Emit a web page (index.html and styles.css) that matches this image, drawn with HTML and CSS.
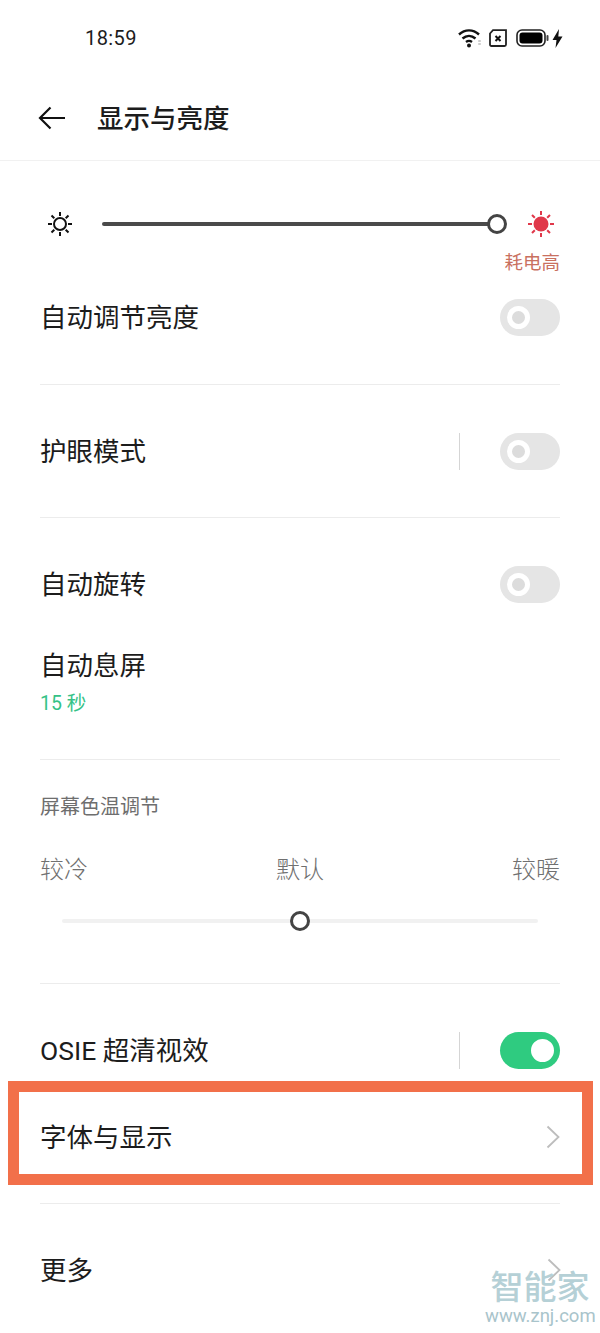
FILE: index.html
```html
<!DOCTYPE html>
<html lang="zh-CN">
<head>
    <meta charset="UTF-8">
    <meta name="viewport" content="width=device-width, initial-scale=1.0">
    <title>显示与亮度</title>
    <link rel="stylesheet" href="styles.css">
</head>
<body>
    <div class="phone">
        <div class="status-bar">
            <span class="time">18:59</span>
            <div class="status-icons">
                <svg class="wifi" width="24" height="20" viewBox="0 0 24 20">
                    <path d="M1 6.500C7 1 15 1 21 6.500M4.500 10.500C8.500 7 13.500 7 17.500 10.500M8 14C10 12.500 12 12.500 14 14" fill="none" stroke="#111" stroke-width="2.400"/>
                    <circle cx="11" cy="17.500" r="2" fill="#111"/>
                    <path d="M21.500 12v6" stroke="#ccc" stroke-width="2.500" stroke-dasharray="2 1"/>
                </svg>
                <svg width="18" height="18" viewBox="0 0 18 18">
                    <path d="M4 1.200H17V15.500Q17 17 15.500 17H2.500Q1 17 1 15.500V4.500Z" fill="none" stroke="#222" stroke-width="1.800"/>
                    <path d="M6.500 7L11.500 12M11.500 7L6.500 12" stroke="#111" stroke-width="2"/>
                </svg>
                <svg class="battery" width="33" height="18" viewBox="0 0 33 18">
                    <rect x="1" y="1" width="28" height="16" rx="5" fill="none" stroke="#222" stroke-width="1.600"/>
                    <rect x="3.500" y="3.500" width="23" height="11" rx="3" fill="#000"/>
                    <rect x="30.500" y="6" width="2" height="6" rx="1" fill="#444"/>
                </svg>
                <svg class="bolt" width="11" height="19" viewBox="0 0 11 19">
                    <path d="M7 0L0.500 11H4.500L3.500 19L10.500 7.500H6.300Z" fill="#111"/>
                </svg>
            </div>
        </div>

        <div class="title-bar">
            <svg class="back" width="28" height="24" viewBox="0 0 28 24">
                <path d="M27 12H2M12.500 1.500L2 12L12.500 22.500" fill="none" stroke="#111" stroke-width="2.200"/>
            </svg>
            <h1>显示与亮度</h1>
        </div>

        <div class="content">
            <div class="group group-brightness">
                <div class="brightness">
                    <svg class="sun" width="28" height="28" viewBox="0 0 28 28">
                        <circle cx="14" cy="14" r="6" fill="none" stroke="#111" stroke-width="2"/>
                        <path d="M14 2v4M14 22v4M2 14h4M22 14h4M5.500 5.500l2.800 2.800M19.700 19.700l2.800 2.800M5.500 22.500l2.800-2.800M19.700 8.300l2.800-2.800" stroke="#111" stroke-width="2"/>
                    </svg>
                    <div class="track">
                        <div class="thumb"></div>
                    </div>
                    <svg class="sun" width="28" height="28" viewBox="0 0 28 28">
                        <circle cx="14" cy="14" r="7.500" fill="#e0384a"/>
                        <path d="M14 1v4M14 23v4M1 14h4M23 14h4M5 5l2.800 2.800M20.200 20.200L23 23M5 23l2.800-2.800M20.200 7.800L23 5" stroke="#e0384a" stroke-width="2"/>
                    </svg>
                </div>
                <div class="power-note">耗电高</div>
                <div class="row">
                    <span class="label">自动调节亮度</span>
                    <div class="toggle"></div>
                </div>
            </div>

            <div class="group">
                <div class="row">
                    <span class="label">护眼模式</span>
                    <div class="row-end">
                        <div class="sep"></div>
                        <div class="toggle"></div>
                    </div>
                </div>
            </div>

            <div class="group group-display">
                <div class="row">
                    <span class="label">自动旋转</span>
                    <div class="toggle"></div>
                </div>
                <div class="sleep">
                    <div class="label">自动息屏</div>
                    <div class="sub">15 秒</div>
                </div>
            </div>

            <div class="group group-temp">
                <div class="temp-title">屏幕色温调节</div>
                <div class="temp-labels">
                    <span>较冷</span>
                    <span>默认</span>
                    <span>较暖</span>
                </div>
                <div class="temp-track">
                    <div class="temp-thumb"></div>
                </div>
            </div>

            <div class="group group-last">
                <div class="row row-short">
                    <span class="label">OSIE 超清视效</span>
                    <div class="row-end">
                        <div class="sep"></div>
                        <div class="toggle on"></div>
                    </div>
                </div>
                <div class="highlight">
                    <span class="label">字体与显示</span>
                    <svg class="chevron" width="14" height="24" viewBox="0 0 14 24">
                        <path d="M1.500 1.500L12.500 12L1.500 22.500" fill="none" stroke="#bdbdbd" stroke-width="1.800"/>
                    </svg>
                </div>
            </div>

            <div class="group group-more">
                <div class="row">
                    <span class="label">更多</span>
                    <svg class="chevron" width="14" height="24" viewBox="0 0 14 24">
                        <path d="M1.500 1.500L12.500 12L1.500 22.500" fill="none" stroke="#bdbdbd" stroke-width="1.800"/>
                    </svg>
                </div>
            </div>
        </div>

        <div class="watermark">
            <div class="wm-name">智能家</div>
            <div class="wm-url">www.znj.com</div>
        </div>
    </div>
</body>
</html>
```

FILE: styles.css
```css
*, *::after {
    box-sizing: border-box;
}
body {
    margin: 0;
    background: #fff;
    font-family: Roboto, "Noto Sans CJK SC", sans-serif;
    color: #1c1c1c;
}
.phone {
    position: relative;
    width: 600px;
    height: 1333px;
    overflow: hidden;
    background: #fff;
}
.status-bar {
    height: 76px;
    display: flex;
    align-items: center;
    justify-content: space-between;
    padding: 0 37px 0 85px;
}
.time {
    font-size: 20px;
    letter-spacing: 0.4px;
}
.status-icons {
    display: flex;
    align-items: center;
    gap: 9px;
}
.wifi {
    margin-right: -2px;
}
.battery {
    margin-right: -6px;
}
.title-bar {
    height: 85px;
    display: flex;
    align-items: center;
    gap: 31px;
    padding: 0 0 0 38px;
    border-bottom: 1px solid #f1f1f1;
}
.back {
    flex: none;
}
h1 {
    margin: 0;
    padding-top: 2px;
    font-size: 26.5px;
    font-weight: 500;
    line-height: 84px;
}
.content {
    padding: 0 40px;
}
.group {
    padding: 29px 0 29px;
    border-bottom: 1px solid #ececec;
}
.row {
    height: 74px;
    display: flex;
    align-items: center;
    justify-content: space-between;
}
.row-short {
    height: 60px;
    margin-bottom: 1px;
}
.row-end {
    display: flex;
    align-items: center;
    gap: 40px;
}
.label {
    padding-top: 3px;
    padding-bottom: 1px;
    font-size: 26.5px;
    font-weight: 400;
    line-height: 36px;
}
.sep {
    width: 1px;
    height: 37px;
    background: #d5d5d5;
}
.toggle {
    position: relative;
    width: 60px;
    height: 37px;
    border-radius: 19px;
    background: #e5e5e5;
}
.toggle::after {
    content: "";
    position: absolute;
    left: 7px;
    top: 7px;
    width: 23px;
    height: 23px;
    border-radius: 50%;
    border: 5px solid #fff;
    background: #dcdcdc;
}
.toggle.on {
    background: #2fcb80;
}
.toggle.on::after {
    left: 31px;
    background: #fff;
}
.chevron {
    margin-right: -1px;
}

/* brightness */
.group-brightness {
    padding: 40px 0 30px;
}
.brightness {
    height: 46px;
    display: flex;
    align-items: center;
    margin: 0 5px 0 6px;
}
.track {
    position: relative;
    flex: 1;
    height: 4px;
    margin: 0 36px 0 28px;
    background: #4a4a4a;
    border-radius: 2px;
}
.thumb {
    position: absolute;
    right: -16px;
    top: -8px;
    width: 20px;
    height: 20px;
    border: 3.500px solid #444;
    border-radius: 50%;
    background: #fff;
}
.power-note {
    margin-top: 4px;
    margin-bottom: 5px;
    font-size: 18.5px;
    line-height: 24px;
    text-align: right;
    color: #c9705f;
}

/* rotate and sleep */
.group-display {
    padding-bottom: 42px;
}
.sleep {
    padding-top: 24px;
}
.sub {
    margin-top: 6px;
    font-size: 19.500px;
    line-height: 26px;
    color: #35c287;
}

/* colour temperature */
.group-temp {
    padding: 33px 0 60px;
}
.temp-title {
    font-size: 20px;
    line-height: 28px;
    color: #6e6e6e;
}
.temp-labels {
    display: flex;
    justify-content: space-between;
    margin-top: 33px;
    font-size: 24px;
    line-height: 32px;
    font-weight: 300;
    color: #707070;
}
.temp-track {
    position: relative;
    height: 4px;
    margin: 33px 22px 0;
    background: #f1f1f1;
    border-radius: 2px;
}
.temp-thumb {
    position: absolute;
    left: 228px;
    top: -8px;
    width: 20px;
    height: 20px;
    border: 3.500px solid #444;
    border-radius: 50%;
    background: #fff;
}

/* last rows */
.group-last {
    padding: 36px 0 18px;
}
.highlight {
    height: 104px;
    display: flex;
    align-items: center;
    justify-content: space-between;
    margin: 0 -33px 0 -32px;
    padding: 8px 23px 0 21px;
    border: 11px solid #f2704a;
}
.group-more {
    border-bottom: none;
}

/* site watermark over the last row */
.watermark {
    position: absolute;
    left: 485px;
    top: 1270px;
    width: 110px;
    text-align: center;
    color: #b5d0d6;
}
.wm-name {
    font-size: 33px;
    font-weight: 500;
    line-height: 36px;
}
.wm-url {
    font-size: 18.500px;
    line-height: 20px;
    color: #a9c4cb;
}
```
